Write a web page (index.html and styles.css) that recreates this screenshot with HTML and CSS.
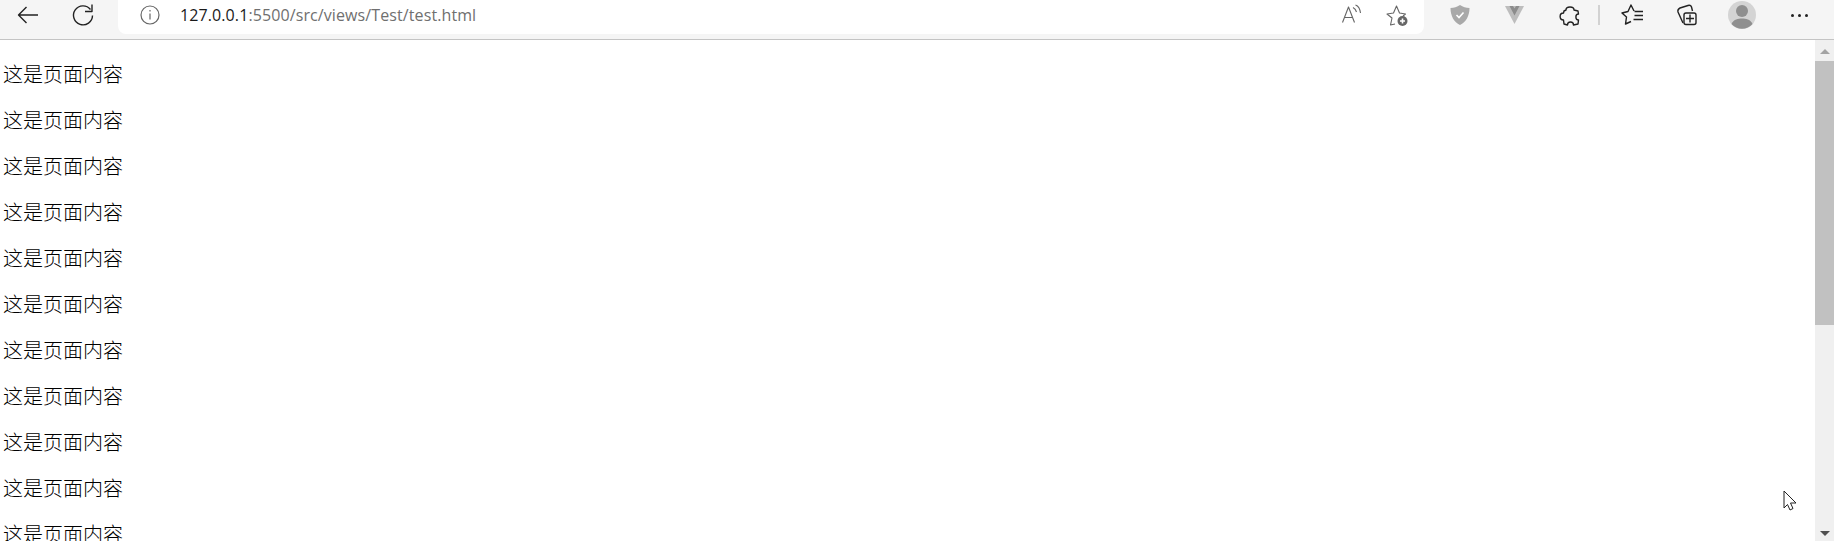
FILE: index.html
```html
<!DOCTYPE html>
<html lang="zh">
<head>
  <meta charset="UTF-8">
  <title>test</title>
  <link rel="stylesheet" href="styles.css">
</head>
<body>
  <div class="toolbar">
    <div class="nav-btns">
      <svg class="nav-icon" width="24" height="24" viewBox="0 0 24 24"><path d="M22 12H3M10.500 4 2.500 12l8 8"/></svg>
      <svg class="nav-icon" width="24" height="24" viewBox="0 0 24 24"><path d="M19.500 6.500A9.500 9.500 0 1 0 21.500 12.500M21 1.500V8.500H14"/></svg>
    </div>
    <div class="address-bar">
      <div class="address-left">
        <svg class="info-icon" width="20" height="20" viewBox="0 0 20 20"><circle cx="10" cy="10" r="9"/><path d="M10 8.500v6M10 5v1.500"/></svg>
        <span class="url"><span class="url-host">127.0.0.1</span>:5500/src/views/Test/test.html</span>
      </div>
      <div class="address-right">
        <svg class="tool-icon" width="22" height="22" viewBox="0 0 22 22"><path d="M1.500 18.500 7.500 3l6 15.500M3.500 13.500h8M12 3.500c2 1 3 2.500 3.500 4.500M14.500 1c3 1 4.500 4 5 8"/></svg>
        <svg class="tool-icon" width="24" height="24" viewBox="0 0 24 24"><path d="M10 20 5.500 21 7 14 2 10 8.500 9 11.500 2 14.500 9 20.500 10 18 12"/><circle class="icon-fill" cx="17.500" cy="17" r="5"/><path class="icon-cut" d="M17.500 14.500v5M15 17h5"/></svg>
      </div>
    </div>
    <div class="extensions">
      <div class="ext-slot">
        <svg width="22" height="22" viewBox="0 0 22 22"><path class="shield" d="M11 1C14 3 17 4 20.500 4 20.500 12 17 18 11 21 5 18 1.500 12 1.500 4 5 4 8 3 11 1z"/><path class="icon-cut" d="m7.500 11 2.500 2.500 4.500-5"/></svg>
      </div>
      <div class="ext-slot">
        <svg width="22" height="22" viewBox="0 0 22 22"><path class="vue-light" d="M1 2h19L10.500 20z"/><path class="vue-dark" d="M5.500 2h3.500l1.500 2.500L12 2h3.500l-5 9.500z"/></svg>
      </div>
      <div class="ext-slot">
        <svg class="tool-icon dark" width="24" height="24" viewBox="0 0 24 24"><path d="M8 7C8 3 16 3 16 7L20 8 20.500 11C17 11 17 17 20.500 17L20 21 15.500 22C15.500 18 9.500 18 9.500 22L6 21 5.500 17C1 17 1 10 5.500 10L6 8z"/></svg>
      </div>
      <span class="divider"></span>
      <div class="ext-slot">
        <svg class="tool-icon dark" width="24" height="24" viewBox="0 0 24 24"><path d="M14 8 11 2 8 8.500 2 10 6.500 14 5.500 21 11 18.500M14.500 8.500H23M14.500 12.500H23M13.500 16.500H23"/></svg>
      </div>
      <div class="ext-slot">
        <svg class="tool-icon dark" width="24" height="24" viewBox="0 0 24 24"><path d="M8 20 3 9C2.500 7 3 6 5 5L13 2.500C14.500 2 16 2.500 16.500 4L17.500 8"/><rect x="9" y="10" width="12" height="11.500" rx="2"/><path d="M15 11.500v8M11 15.500h8"/></svg>
      </div>
      <div class="ext-slot">
        <svg class="avatar" width="28" height="28" viewBox="0 0 28 28"><circle class="avatar-bg" cx="14" cy="14" r="14"/><circle class="avatar-fg" cx="14" cy="10" r="6"/><path class="avatar-fg" d="M3.500 23C6 18 10 17.500 14 17.500S22 18 24.500 23A14 14 0 0 1 3.500 23z"/></svg>
      </div>
      <div class="ext-slot more"><i></i><i></i><i></i></div>
    </div>
  </div>
  <div class="viewport">
    <div class="content">
      <p>这是页面内容</p>
      <p>这是页面内容</p>
      <p>这是页面内容</p>
      <p>这是页面内容</p>
      <p>这是页面内容</p>
      <p>这是页面内容</p>
      <p>这是页面内容</p>
      <p>这是页面内容</p>
      <p>这是页面内容</p>
      <p>这是页面内容</p>
      <p>这是页面内容</p>
    </div>
    <div class="scrollbar">
      <div class="arrow-up"></div>
      <div class="thumb"></div>
      <div class="track"></div>
      <div class="arrow-down"></div>
    </div>
    <svg class="cursor" width="14" height="22" viewBox="0 0 14 22"><path d="M1 1v17l3.500-3.500L7 20l3-1.500L7.500 13H13z"/></svg>
  </div>
</body>
</html>
```

FILE: styles.css
```css
html, body {
  margin: 0;
  height: 541px;
  overflow: hidden;
  background: #fff;
}
body {
  font-family: "Noto Sans CJK SC", sans-serif;
}
svg {
  display: block;
  flex: none;
}
.toolbar {
  height: 39px;
  background: #f5f5f5;
  border-bottom: 1px solid #c4c4c4;
  display: flex;
  align-items: flex-start;
}
.nav-btns {
  width: 118px;
  padding-left: 16px;
  padding-top: 3px;
  display: flex;
  gap: 31px;
  box-sizing: border-box;
}
.nav-icon path, .tool-icon path, .tool-icon rect {
  fill: none;
  stroke: #222;
  stroke-width: 1.400;
  stroke-linejoin: round;
}
.address-bar {
  width: 1306px;
  height: 34px;
  background: #fff;
  border-radius: 0 0 8px 8px;
  display: flex;
  justify-content: space-between;
}
.address-left {
  display: flex;
  align-items: center;
  padding: 0 0 4px 22px;
  gap: 20px;
}
.info-icon circle, .info-icon path {
  fill: none;
  stroke: #666;
  stroke-width: 1.200;
}
.url {
  font-family: "Open Sans", sans-serif;
  font-size: 16px;
  letter-spacing: 0.1px;
  color: #6f6f6f;
}
.url-host {
  color: #1a1a1a;
}
.address-right {
  display: flex;
  align-items: flex-start;
  gap: 22px;
  padding: 4px 15px 0 0;
}
.address-right .tool-icon path {
  stroke: #666;
  stroke-width: 1.100;
}
.address-right .tool-icon .icon-cut {
  stroke: #fff;
  stroke-width: 1.600;
}
.icon-fill {
  fill: #666;
}
.extensions {
  flex: 1;
  display: flex;
  align-items: center;
  height: 30px;
  padding-left: 8px;
}
.ext-slot {
  width: 55px;
  flex: none;
  display: flex;
  justify-content: center;
  align-items: center;
}
.shield {
  fill: #a9a9a9;
}
.icon-cut {
  fill: none;
  stroke: #fff;
  stroke-width: 1.600;
}
.vue-light {
  fill: #bdbdbd;
}
.vue-dark {
  fill: #8c8c8c;
}
.divider {
  width: 2px;
  height: 20px;
  background: #d2d2d2;
  margin: 0 4px 0 1px;
}
.avatar-bg {
  fill: #d4d4d4;
}
.avatar-fg {
  fill: #8f8f8f;
}
.more {
  gap: 4px;
  margin-left: 3px;
}
.more i {
  width: 3px;
  height: 3px;
  border-radius: 50%;
  background: #222;
}
.viewport {
  position: relative;
  height: 501px;
  display: flex;
  overflow: hidden;
}
.content {
  flex: 1;
  padding-left: 3px;
  padding-top: 1px;
  overflow: hidden;
}
.content p {
  margin: 20px 0;
  font-size: 20px;
  font-weight: 300;
  line-height: 26px;
  color: #000;
}
.scrollbar {
  width: 19px;
  background: #f0f0f0;
  display: flex;
  flex-direction: column;
  align-items: center;
}
.arrow-up {
  margin: 9px 0 7px;
  border-left: 5px solid transparent;
  border-right: 5px solid transparent;
  border-bottom: 5px solid #a3a3a3;
}
.thumb {
  width: 100%;
  height: 264px;
  background: #c1c1c1;
}
.track {
  flex: 1;
}
.arrow-down {
  margin-bottom: 5px;
  border-left: 5px solid transparent;
  border-right: 5px solid transparent;
  border-top: 5px solid #505050;
}
.cursor {
  position: absolute;
  left: 1783px;
  top: 450px;
}
.cursor path {
  fill: #fff;
  stroke: #222;
  stroke-width: 1;
}
```
